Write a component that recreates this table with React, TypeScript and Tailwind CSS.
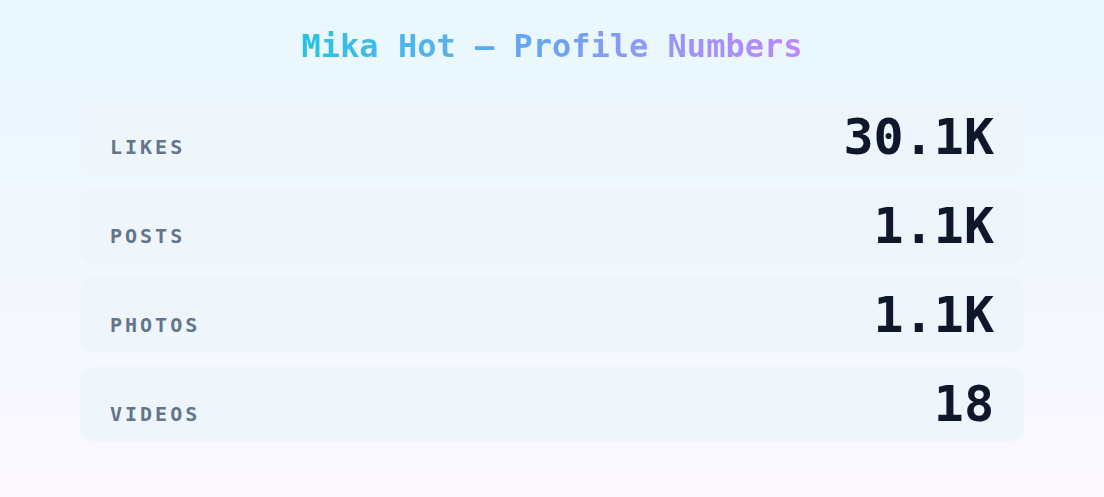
const stats = [
	{ label: "Likes", value: "30.1K" },
	{ label: "Posts", value: "1.1K" },
	{ label: "Photos", value: "1.1K" },
	{ label: "Videos", value: "18" },
];

export default function App() {
	return (
		<div className="min-h-screen bg-linear-to-b from-[#e8f8fe] to-[#fbf8fe] px-20 pt-[30px] font-['DejaVu_Sans_Mono',monospace]">
			<h1 className="mb-[38px] text-center text-[32px] font-bold leading-none">
				<span className="bg-linear-to-r from-[#22c3e6] via-[#6aa2f2] to-[#c084fc] bg-clip-text text-transparent">
					Mika Hot — Profile Numbers
				</span>
			</h1>

			<div className="flex flex-col gap-[15px]">
				{stats.map((s) => (
					<div
						key={s.label}
						className="flex items-baseline justify-between rounded-xl bg-[#eef6fc] px-[30px] py-3"
					>
						<span className="text-[20px] font-bold uppercase tracking-[0.15em] text-[#64748b]">
							{s.label}
						</span>
						<span className="text-[50px] font-bold leading-none text-[#0f172a]">{s.value}</span>
					</div>
				))}
			</div>
		</div>
	);
}
